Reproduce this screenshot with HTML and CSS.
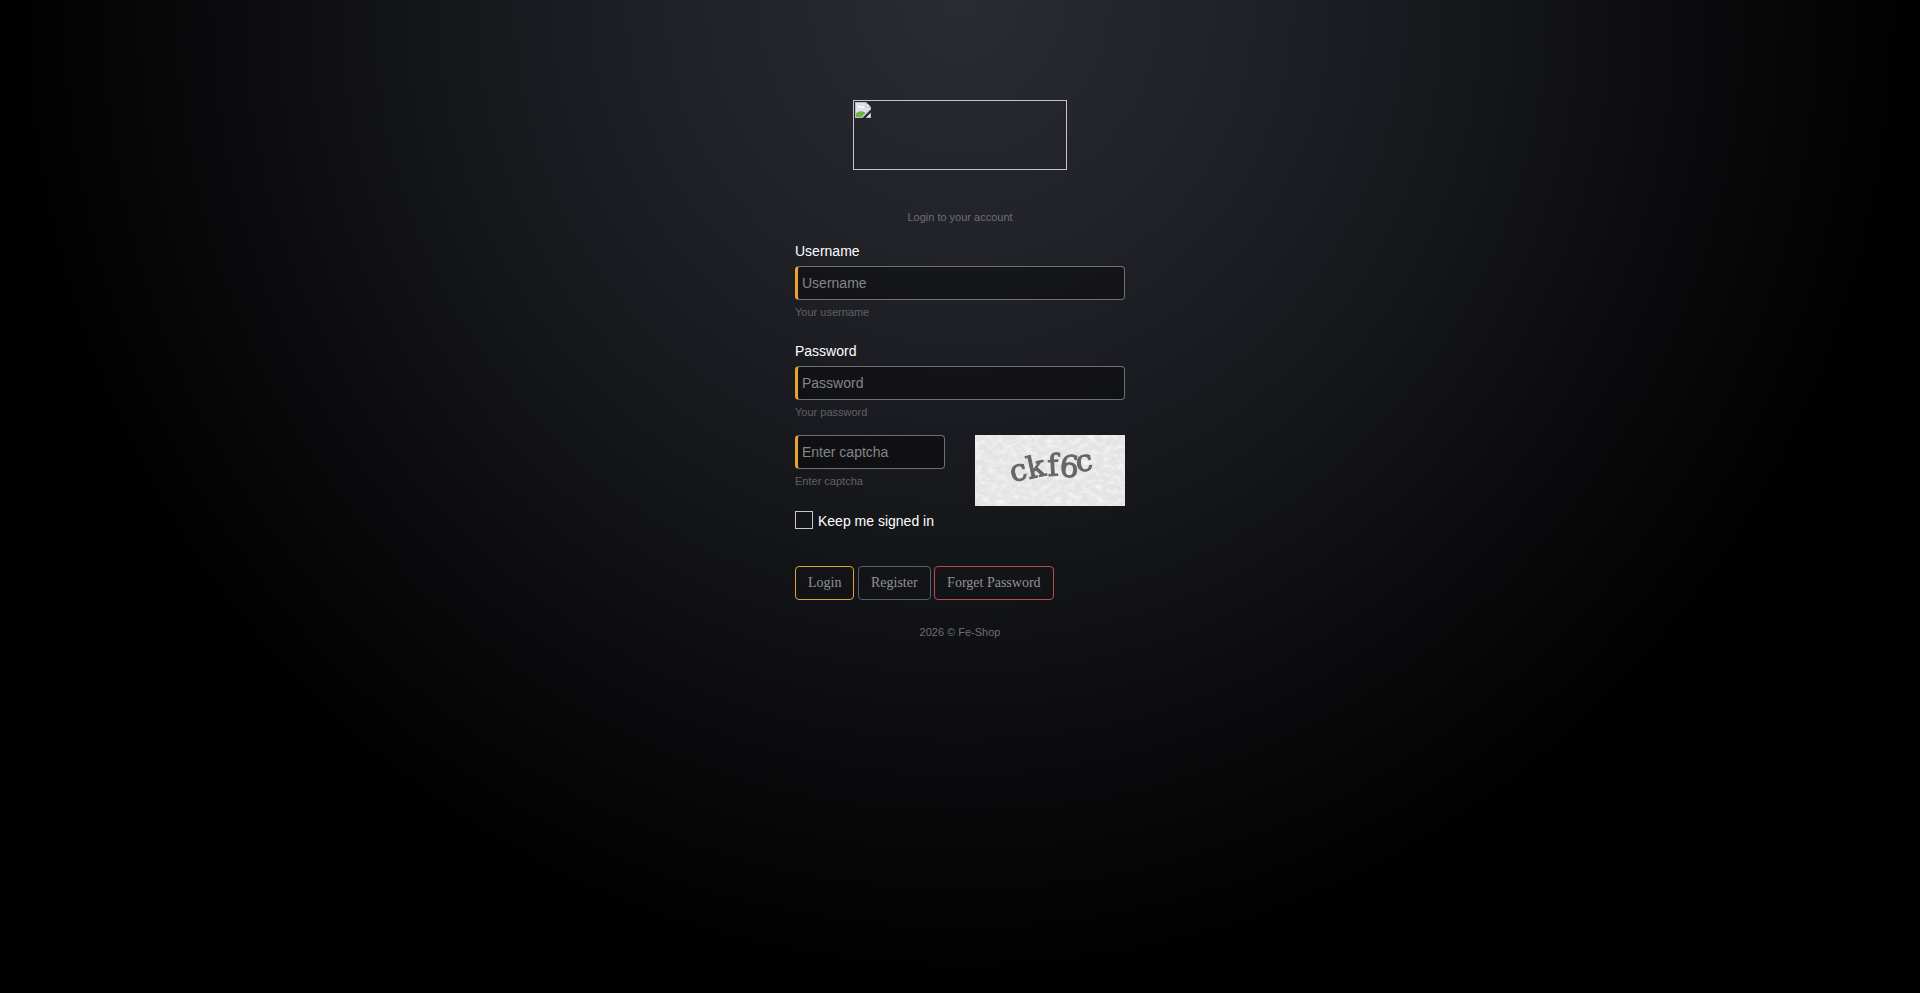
FILE: index.html
```html
<!DOCTYPE html>
<html lang="en">
<head>
<meta charset="utf-8">
<title>Login - Fe-Shop</title>
<link rel="stylesheet" href="styles.css">
</head>
<body>
<main class="login">
  <div class="logo">
    <svg class="broken" width="16" height="16" viewBox="0 0 16 16" aria-hidden="true">
      <path d="M0 0H11L16 5V7.500L7.500 16H0Z" fill="#b9bdc6"/>
      <path d="M1 1H10.500V5.500H15V7L7 15H1Z" fill="#dde2ea"/>
      <path d="M11.500 1.400L14.600 4.500H11.500Z" fill="#fff"/>
      <path d="M2.500 5.500C3 3.800 5.500 3.500 6.500 4.700 8 4.300 9.300 4.800 9.500 5.900Z" fill="#fff"/>
      <path d="M1 15V11.500C3.500 8.800 6.500 8.300 10.500 10.700L6.500 15Z" fill="#6fb43f"/>
      <path d="M10.500 16L16 10.500V16Z" fill="#b9bdc6"/>
      <path d="M12 15L15 12V15Z" fill="#e9ecf2"/>
    </svg>
  </div>
  <p class="subtitle">Login to your account</p>
  <form class="form">
    <div class="field">
      <label class="label" for="u">Username</label>
      <input class="input" id="u" type="text" placeholder="Username">
      <small class="hint">Your username</small>
    </div>
    <div class="field field-last">
      <label class="label" for="p">Password</label>
      <input class="input" id="p" type="password" placeholder="Password">
      <small class="hint">Your password</small>
    </div>
    <div class="captcha-row">
      <div class="captcha-field">
        <input class="input" type="text" placeholder="Enter captcha">
        <small class="hint">Enter captcha</small>
      </div>
      <svg class="captcha" width="150" height="71" viewBox="0 0 150 71" role="img" aria-label="captcha">
        <defs>
          <filter id="paper" x="0" y="0" width="100%" height="100%">
            <feTurbulence type="fractalNoise" baseFrequency="0.14 0.2" numOctaves="4" seed="7"/>
            <feColorMatrix type="matrix" values="0 0 0 0 1  0 0 0 0 1  0 0 0 0 1  1.500 0 0 0 -0.620"/>
          </filter>
          <filter id="grain" x="0" y="0" width="100%" height="100%">
            <feTurbulence type="fractalNoise" baseFrequency="0.4" numOctaves="2" seed="12"/>
            <feColorMatrix type="matrix" values="0 0 0 0 0.76  0 0 0 0 0.76  0 0 0 0 0.76  0 1.200 0 0 -0.550"/>
          </filter>
          <filter id="soft" x="-10%" y="-10%" width="120%" height="120%"><feGaussianBlur stdDeviation="0.4"/></filter>
        </defs>
        <rect width="150" height="71" fill="#e4e4e4"/>
        <rect width="150" height="71" filter="url(#grain)"/>
        <rect width="150" height="71" filter="url(#paper)"/>
        <g class="captcha-text" filter="url(#soft)">
          <text x="37" y="47" transform="rotate(-12 37 47)">c</text>
          <text x="54" y="44" transform="rotate(-12 54 44)">k</text>
          <text x="73" y="41" transform="rotate(-3 73 41)">f</text>
          <text x="84" y="41" transform="rotate(5 84 41)">6</text>
          <text x="102" y="37" transform="rotate(-8 102 37)">c</text>
        </g>
      </svg>
    </div>
    <label class="check"><span class="box"></span><span class="check-text">Keep me signed in</span></label>
    <div class="actions">
      <button class="btn btn-login" type="button">Login</button>
      <button class="btn btn-register" type="button">Register</button>
      <button class="btn btn-forget" type="button">Forget Password</button>
    </div>
  </form>
  <p class="copy">2026 © Fe-Shop</p>
</main>
</body>
</html>
```
FILE: styles.css
```css
* { box-sizing: border-box; }
html, body { height: 100%; }
body {
  margin: 0;
  background: radial-gradient(ellipse 50% 100% at 50% 0, #2a2b33 0%, #212228 28%, #15161a 55%, #0a0a0c 78%, #000 100%);
  background-color: #000;
  font-family: "Liberation Sans", Arial, sans-serif;
  color: #fff;
}
.login {
  width: 330px;
  margin: 0 auto;
  padding-top: 100px;
}
.logo {
  width: 214px;
  height: 70px;
  margin: 0 auto;
  border: 1px solid #c4c4c4;
  padding: 1px;
  line-height: 0;
}
.broken { display: block; }
.subtitle {
  margin: 41px 0 0;
  height: 13px;
  line-height: 13px;
  font-size: 11px;
  text-align: center;
  color: #6e6e72;
}
.form { margin-top: 19px; }
.field { margin-bottom: 24px; }
.field-last { margin-bottom: 16px; }
.label {
  display: block;
  font-size: 14px;
  line-height: 16px;
  margin-bottom: 7px;
  color: #fff;
}
.input {
  display: block;
  width: 100%;
  height: 34px;
  padding: 0 5px 0 4px;
  background: rgba(0, 0, 0, 0.35);
  border: 1px solid #707072;
  border-left: 3px solid #e8a32e;
  border-radius: 4px;
  font: 14px "Liberation Sans", Arial, sans-serif;
  color: #fff;
  outline: none;
}
.input::placeholder { color: #858585; opacity: 1; }
.hint {
  display: block;
  margin-top: 6px;
  font-size: 11px;
  line-height: 13px;
  color: #616164;
}
.captcha-row {
  display: flex;
  justify-content: space-between;
  align-items: flex-start;
}
.captcha-field { width: 150px; }
.captcha { display: block; }
.captcha-text {
  font: 30px "DejaVu Serif", "Liberation Serif", serif;
  fill: #666;
  stroke: #666;
  stroke-width: 1px;
}
.check {
  display: flex;
  align-items: center;
  gap: 5px;
  margin-top: 5px;
  font-size: 14px;
  color: #fff;
}
.check-text { margin-top: 2px; }
.box {
  width: 18px;
  height: 18px;
  border: 1px solid #c8c8c8;
  background: transparent;
}
.actions {
  display: flex;
  gap: 3.5px;
  margin-top: 37px;
}
.btn {
  height: 34px;
  padding: 0 12px;
  background: transparent;
  border: 1px solid #666;
  border-radius: 4px;
  font: 14px "Liberation Serif", "Times New Roman", serif;
  color: #929292;
}
.btn-login { border-color: #e0a33a; }
.btn-register { border-color: #5b5d62; }
.btn-forget { border-color: #bb4a4e; }
.copy {
  margin: 26px 0 0;
  font-size: 11px;
  line-height: 13px;
  text-align: center;
  color: #6e6e6e;
}
```
